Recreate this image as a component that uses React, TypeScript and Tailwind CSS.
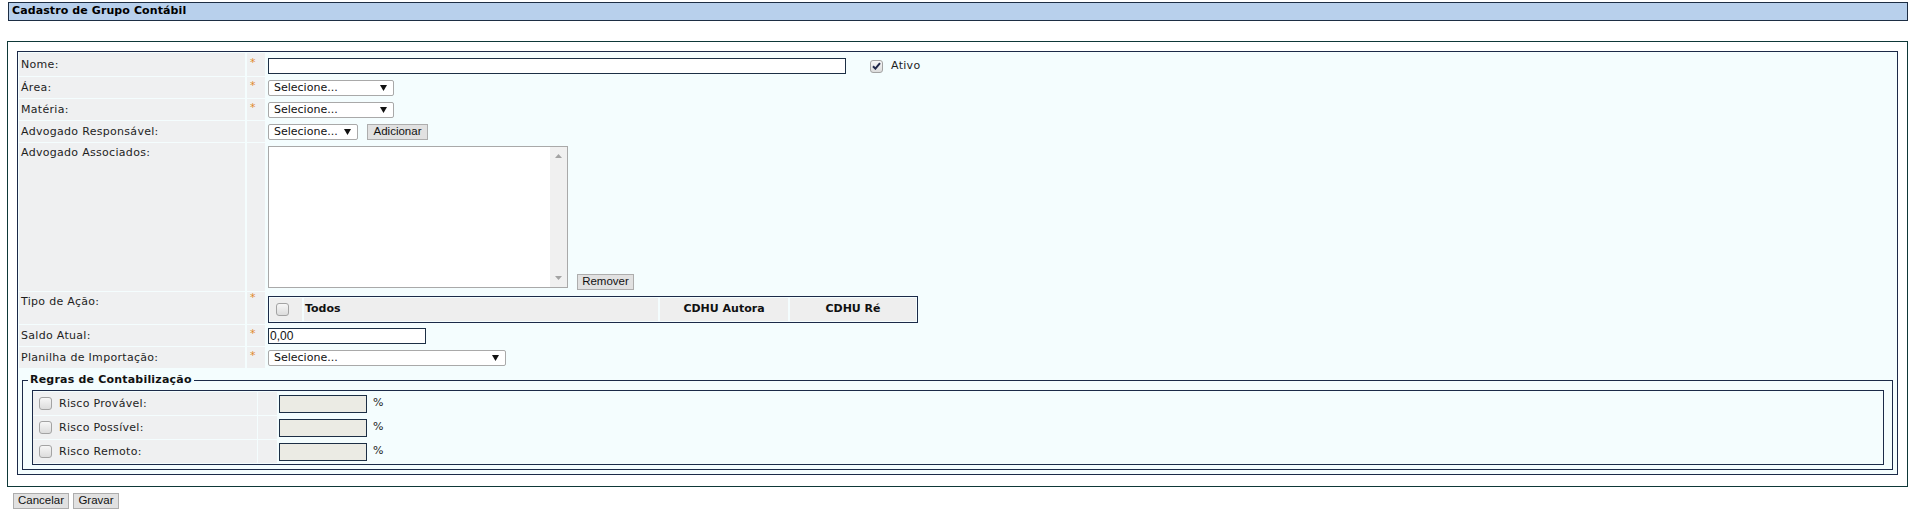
import React from "react";

// Cadastro de Grupo Contábil - form screenshot

const NAVY = "border-[#1b2a48]";

function Check({ checked = false }: { checked?: boolean }) {
  return (
    <span className="inline-flex w-[13px] h-[13px] shrink-0 items-center justify-center rounded-[3px] border border-[#a3a3a3] bg-linear-to-b from-[#f7f7f7] to-[#dcdcdc]">
      {checked && (
        <svg width="9" height="8" viewBox="0 0 9 8">
          <path d="M1 4.2 L3.4 6.6 L8 1.2" fill="none" stroke="#20284a" strokeWidth="2" />
        </svg>
      )}
    </span>
  );
}

function Arrow() {
  return (
    <svg width="7" height="6" viewBox="0 0 7 6" className="shrink-0">
      <path d="M0 0 H7 L3.5 6 Z" fill="#111" />
    </svg>
  );
}

function Select({ width }: { width: string }) {
  return (
    <div
      className={`flex items-center justify-between h-[16px] ${width} border border-[#a9a9a9] rounded-[2px] bg-white pl-[5px] pr-[6px] leading-none text-[#111]`}
    >
      <span>Selecione...</span>
      <Arrow />
    </div>
  );
}

function Btn({ children, width }: { children: React.ReactNode; width: string }) {
  return (
    <button
      className={`h-[16px] ${width} border border-[#adadad] bg-[#e1e1e1] font-['Liberation_Sans',Arial,sans-serif] text-[11.5px] leading-none text-[#111] flex items-center justify-center`}
    >
      {children}
    </button>
  );
}

function Row({
  label,
  required = false,
  height,
  top = false,
  children,
}: {
  label: string;
  required?: boolean;
  height: string;
  top?: boolean;
  children?: React.ReactNode;
}) {
  return (
    <div className={`flex gap-[2px] ${height}`}>
      <div
        className={`w-[226px] shrink-0 bg-[#eff0f1] pl-[2px] flex tracking-[0.3px] ${
          top ? "items-start pt-[2px]" : "items-center pt-[1px]"
        }`}
      >
        {label}
      </div>
      <div
        className={`w-[18px] shrink-0 bg-[#eff0f1] flex justify-start pl-[3px] ${
          top ? "items-start pt-[1px]" : "items-center"
        } text-[#e0892c]`}
      >
        {required && <span className="-mt-[3px]">*</span>}
      </div>
      <div className="flex-1 pl-px flex">{children}</div>
    </div>
  );
}

function RiscoRow({ label }: { label: string }) {
  return (
    <div className="flex h-[23px]">
      <div className="w-[224px] shrink-0 bg-[#eff0f1] flex items-center gap-[7px] pl-[6px] tracking-[0.3px]">
        <Check />
        <span className="pt-[1px]">{label}</span>
      </div>
      <div className="w-[19px] ml-px shrink-0 bg-[#eff0f1]" />
      <div className="flex-1 pl-[2px] flex items-center gap-[6px]">
        <div className="w-[88px] h-[18px] border border-[#1c2f45] bg-[#ebebe4]" />
        <span>%</span>
      </div>
    </div>
  );
}

export default function App() {
  return (
    <div className="w-[1911px] h-[515px] bg-white font-['DejaVu_Sans',Verdana,sans-serif] text-[11px] text-[#1e1e1e] overflow-hidden">
      {/* Title bar */}
      <div className="mt-[2px] ml-[8px] w-[1900px] h-[19px] bg-[#b8d0ec] border border-[#1d2e44] flex items-center pl-[3px] font-bold text-black tracking-[0.1px]">
        Cadastro de Grupo Contábil
      </div>

      {/* Outer box */}
      <div className="mt-[20px] ml-[7px] w-[1901px] border border-[#0e3838] pt-[9px] px-[9px] pb-[11px]">
        <div className={`border ${NAVY} bg-[#f4fdfe] p-px flex flex-col gap-px`}>
          <Row label="Nome:" required height="h-[23px]">
            <div className="flex items-end pb-[2px] w-full">
              <div className="w-[578px] h-[16px] border border-[#1c2f45] bg-white" />
              <div className="flex items-center ml-[24px] self-start mt-[5px]">
                <Check checked />
                <span className="ml-[8px] tracking-[0.3px]">Ativo</span>
              </div>
            </div>
          </Row>
          <Row label="Área:" required height="h-[21px]">
            <div className="flex items-center">
              <Select width="w-[126px]" />
            </div>
          </Row>
          <Row label="Matéria:" required height="h-[21px]">
            <div className="flex items-center">
              <Select width="w-[126px]" />
            </div>
          </Row>
          <Row label="Advogado Responsável:" height="h-[21px]">
            <div className="flex items-center gap-[9px]">
              <Select width="w-[90px]" />
              <Btn width="w-[61px]">Adicionar</Btn>
            </div>
          </Row>
          <Row label="Advogado Associados:" height="h-[148px]" top>
            <div className="flex gap-[9px]">
              <div className="self-start mt-[3px] w-[300px] h-[142px] border border-[#a9a9a9] bg-white flex justify-end">
                <div className="w-[17px] h-full bg-[#f0f0f0] flex flex-col items-center justify-between py-[7px]">
                  <svg width="7" height="4" viewBox="0 0 7 4">
                    <path d="M0 4 H7 L3.5 0 Z" fill="#a3a3a3" />
                  </svg>
                  <svg width="7" height="4" viewBox="0 0 7 4">
                    <path d="M0 0 H7 L3.5 4 Z" fill="#a3a3a3" />
                  </svg>
                </div>
              </div>
              <div className="self-end mb-[1px]">
                <Btn width="w-[57px]">Remover</Btn>
              </div>
            </div>
          </Row>
          <Row label="Tipo de Ação:" required height="h-[32px]" top>
            <div className="pt-[4px]">
              <div className={`w-[650px] h-[27px] border ${NAVY} p-px flex gap-[2px] font-bold text-[#111]`}>
                <div className="w-[32px] bg-[#eeeeee] flex items-center pl-[6px]">
                  <Check />
                </div>
                <div className="w-[354px] bg-[#eeeeee] flex items-center pl-[1px]">Todos</div>
                <div className="w-[128px] bg-[#eeeeee] flex items-center justify-center">CDHU Autora</div>
                <div className="flex-1 bg-[#eeeeee] flex items-center justify-center">CDHU Ré</div>
              </div>
            </div>
          </Row>
          <Row label="Saldo Atual:" required height="h-[21px]">
            <div className="flex items-center">
              <div className="w-[158px] h-[16px] border border-[#1c2f45] bg-white flex items-center pl-px leading-none font-['Liberation_Sans',Arial,sans-serif] text-[12px] text-[#111]">
                0,00
              </div>
            </div>
          </Row>
          <Row label="Planilha de Importação:" required height="h-[21px]">
            <div className="flex items-center">
              <Select width="w-[238px]" />
            </div>
          </Row>

          {/* Regras de Contabilização */}
          <div className="h-[104px] pt-[4px] px-[3px]">
            <fieldset className={`border ${NAVY} pl-[9px] pr-[8px] pb-[4px]`}>
              <legend className="ml-[-4px] px-[2px] font-bold text-[11px] leading-[14px] text-[#111] tracking-[0.2px]">
                Regras de Contabilização
              </legend>
              <div className={`mt-[3px] border ${NAVY} py-px flex flex-col gap-px`}>
                <RiscoRow label="Risco Provável:" />
                <RiscoRow label="Risco Possível:" />
                <RiscoRow label="Risco Remoto:" />
              </div>
            </fieldset>
          </div>
        </div>
      </div>

      {/* Actions */}
      <div className="mt-[6px] ml-[13px] flex gap-[4px]">
        <Btn width="w-[56px]">Cancelar</Btn>
        <Btn width="w-[46px]">Gravar</Btn>
      </div>
    </div>
  );
}
